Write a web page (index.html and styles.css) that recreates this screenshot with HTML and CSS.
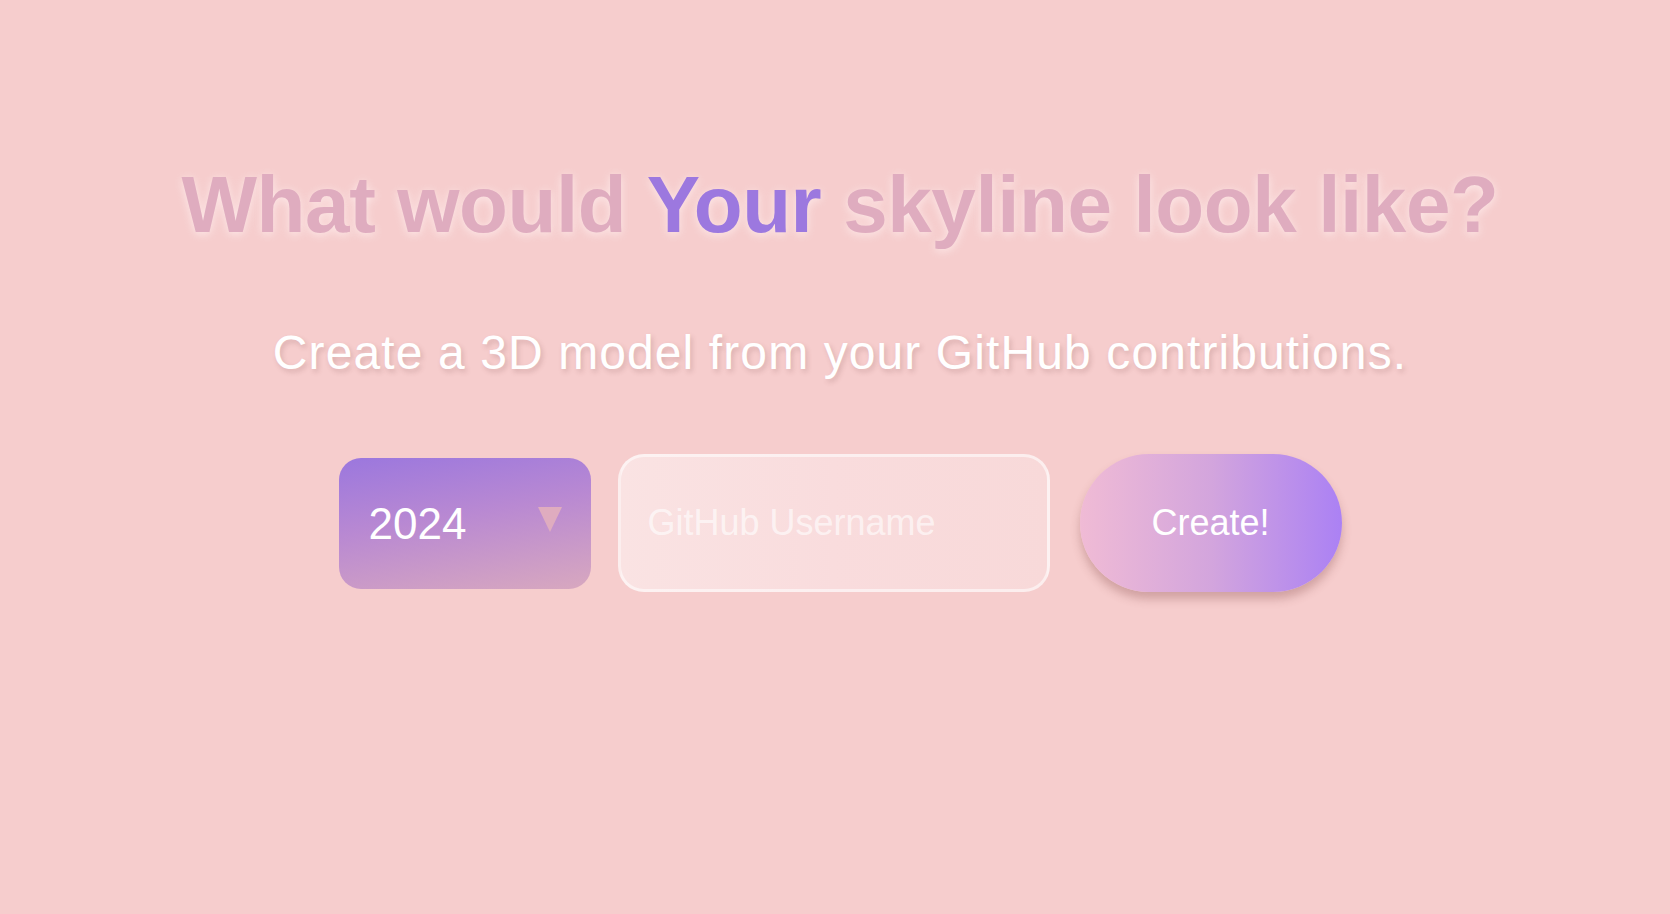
FILE: index.html
```html
<!DOCTYPE html>
<html lang="en">
<head>
<meta charset="utf-8">
<title>GitHub Skyline</title>
<link rel="stylesheet" href="styles.css">
</head>
<body>
<main class="page">
  <h1 class="title">What would <span class="accent">Your</span> skyline look like?</h1>
  <p class="subtitle">Create a 3D model from your GitHub contributions.</p>
  <form class="controls" onsubmit="return false">
    <span class="select-wrap">
      <select class="year">
        <option>2024</option>
        <option>2023</option>
        <option>2022</option>
      </select>
    </span>
    <input class="username" type="text" placeholder="GitHub Username">
    <button class="create" type="submit">Create!</button>
  </form>
</main>
</body>
</html>
```
FILE: styles.css
```css
html, body {
  margin: 0;
  padding: 0;
  height: 100%;
}
body {
  background: #f6cdcd;
  font-family: "Liberation Sans", Arial, Helvetica, sans-serif;
  overflow: hidden;
}
.page {
  display: flex;
  flex-direction: column;
  align-items: center;
  padding: 157px 0 0 10px;
}
.title {
  margin: 0 0 71px;
  font-size: 80px;
  line-height: 96px;
  font-weight: 700;
  letter-spacing: -0.4px;
  color: #dfacbf;
  text-shadow: 0 2px 10px rgba(255, 240, 240, 0.8);
  white-space: nowrap;
}
.accent {
  color: #9c78df;
}
.subtitle {
  margin: 0 0 72px;
  font-size: 48px;
  line-height: 58px;
  letter-spacing: 1.1px;
  color: #ffffff;
  text-shadow: 2px 3px 5px rgba(120, 70, 70, 0.22);
  white-space: nowrap;
}
.controls {
  display: flex;
  align-items: center;
  gap: 27px;
  margin: 0;
}
.select-wrap {
  position: relative;
  display: block;
}
.select-wrap::after {
  content: "";
  position: absolute;
  right: 29px;
  top: 49px;
  width: 0;
  height: 0;
  border-left: 12px solid transparent;
  border-right: 12px solid transparent;
  border-top: 25px solid #dfacbf;
  pointer-events: none;
}
.year {
  appearance: none;
  -webkit-appearance: none;
  display: block;
  width: 252px;
  height: 131px;
  border: none;
  border-radius: 22px;
  padding: 0 0 0 30px;
  margin: 0;
  background: linear-gradient(170deg, #9b77de 0%, #b989d2 45%, #d8a8bf 100%);
  color: #ffffff;
  font-family: "Liberation Sans", Arial, Helvetica, sans-serif;
  font-size: 44px;
  outline: none;
}
.username {
  box-sizing: border-box;
  width: 432px;
  height: 138px;
  margin: 0;
  padding: 0 0 0 27px;
  border: 3px solid rgba(255, 255, 255, 0.55);
  border-radius: 26px;
  background: linear-gradient(90deg, #fae3e3 0%, #f9dcdd 50%, #f8d9d9 100%);
  color: #ffffff;
  font-family: "Liberation Sans", Arial, Helvetica, sans-serif;
  font-size: 36px;
  outline: none;
}
.username::placeholder {
  color: rgba(255, 255, 255, 0.62);
}
.create {
  width: 262px;
  height: 138px;
  margin: 0 0 0 3px;
  padding: 0;
  border: none;
  border-radius: 69px;
  background: linear-gradient(90deg, #f0bbd5 0%, #d3a5dd 50%, #ab81f4 100%);
  color: #ffffff;
  font-family: "Liberation Sans", Arial, Helvetica, sans-serif;
  font-size: 36px;
  box-shadow: 0 7px 10px rgba(130, 70, 70, 0.32);
  cursor: pointer;
}
```
